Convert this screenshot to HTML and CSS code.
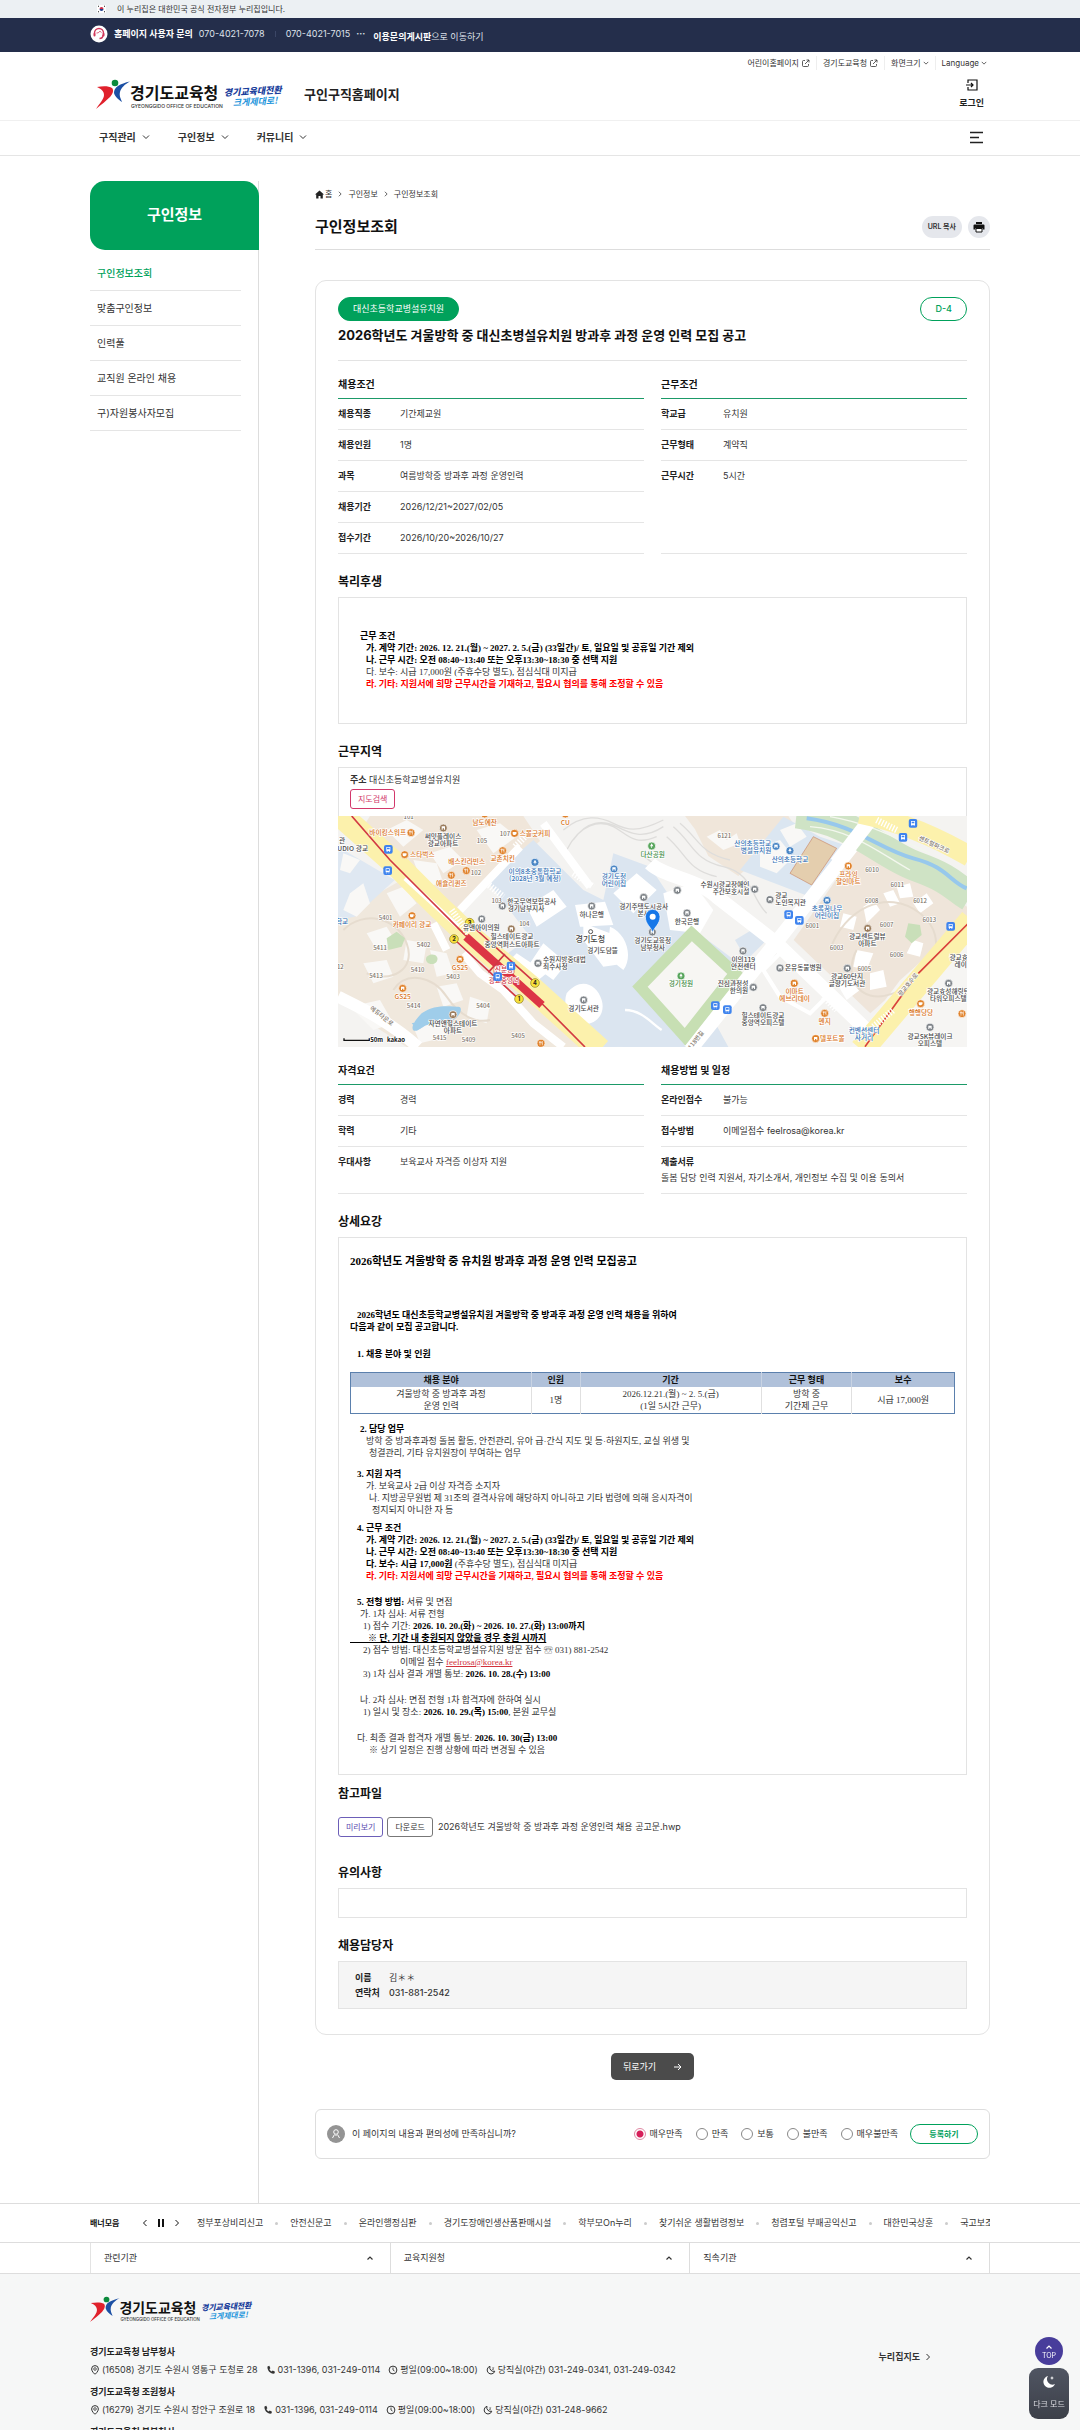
FILE: index.html
```html
<!DOCTYPE html>
<html lang="ko">
<head>
<meta charset="utf-8">
<meta name="viewport" content="width=device-width, initial-scale=1">
<title>구인정보조회 - 경기도교육청 구인구직홈페이지</title>
<link rel="stylesheet" href="styles.css">
</head>
<body>
<svg class="defs" width="0" height="0" aria-hidden="true">
  <symbol id="down" viewBox="0 0 8 8"><path d="M1 2.5 4 5.5 7 2.5" fill="none" stroke="currentColor"/></symbol>
  <symbol id="up" viewBox="0 0 8 8"><path d="M1.5 5.5 4 3 6.500 5.500" fill="none" stroke="currentColor" stroke-width="1.200"/></symbol>
  <symbol id="right" viewBox="0 0 8 8"><path d="M2.500 1 5.500 4 2.500 7" fill="none" stroke="currentColor"/></symbol>
  <symbol id="left" viewBox="0 0 8 8"><path d="M5.500 1 2.500 4 5.500 7" fill="none" stroke="currentColor"/></symbol>
  <symbol id="ext" viewBox="0 0 9 9"><path d="M4 1.500H2.500a1 1 0 0 0-1 1v4a1 1 0 0 0 1 1h4a1 1 0 0 0 1-1V5M5.500 1H8v2.500M8 1 4 5" fill="none" stroke="currentColor" stroke-width=".8"/></symbol>
  <symbol id="pin" viewBox="0 0 10 10"><path d="M5 .6a3.400 3.400 0 0 1 3.400 3.400C8.400 6.500 5 9.400 5 9.400S1.600 6.500 1.600 4A3.400 3.400 0 0 1 5 .6z" fill="none" stroke="currentColor"/><circle cx="5" cy="4" r="1.300" fill="none" stroke="currentColor" stroke-width=".8"/></symbol>
  <symbol id="tel" viewBox="0 0 10 10"><path d="M1.500 1.500 3.300.8l1.100 2.400-1 .9c.4 1 1.200 1.900 2.300 2.400l1-1L9 6.800 8.400 8.600C4.600 9.300.9 5.300 1.500 1.500z" fill="currentColor"/></symbol>
  <symbol id="clock" viewBox="0 0 10 10"><circle cx="5" cy="5" r="3.900" fill="none" stroke="currentColor"/><path d="M5 2.500V5l1.500 1" fill="none" stroke="currentColor" stroke-width=".9"/></symbol>
  <symbol id="moon" viewBox="0 0 10 10"><path d="M4 1.300A3.900 3.900 0 1 0 8.800 6.200 3.800 3.800 0 0 1 4 1.300z" fill="none" stroke="currentColor"/><path d="M6.300 2.800h1.500L6.300 4.600h1.500" fill="none" stroke="currentColor" stroke-width=".6"/></symbol>
  <symbol id="figure" viewBox="0 0 36 31">
    <circle cx="19" cy="4" r="3.300" fill="#0b8a3c"/>
    <path d="M1 8c6-1 12-1 15 1 2 2 1 6-2 9C10 22 6 25 0 30c4-6 8-10 8-14 0-4-3-6-7-8z" fill="#e0212c"/>
    <path d="M34 2.500C29 5 25 9 24 13c-1 4 1 7 2 10-3-2-7-5-8-9 0-3 1-5 4-7 3-2 7-3.500 12-4.500z" fill="#1c50a4"/>
  </symbol>
  <symbol id="bus" viewBox="0 0 28 28"><rect x="1" y="1" width="26" height="26" rx="6" fill="#3f84ee"/><path d="M8 7h12v12H8z" fill="#fff"/><path d="M10 9h8v5h-8z" fill="#3f84ee"/><path d="M9 20h3v2H9zm7 0h3v2h-3z" fill="#fff"/></symbol>
  <symbol id="poi" viewBox="0 0 28 28"><circle cx="14" cy="14" r="12" fill="currentColor" stroke="#fff" stroke-width="2"/><path d="M9 9h10v10h-3v-4h-4v4H9z" fill="#fff"/></symbol>
  <symbol id="cup" viewBox="0 0 28 28"><circle cx="14" cy="14" r="12" fill="currentColor" stroke="#fff" stroke-width="2"/><path d="M8 10h10v5a4 4 0 0 1-4 4h-2a4 4 0 0 1-4-4z" fill="#fff"/><path d="M18 11h2v4h-2" fill="none" stroke="#fff" stroke-width="1.500"/></symbol>
  <symbol id="fork" viewBox="0 0 28 28"><circle cx="14" cy="14" r="12" fill="currentColor" stroke="#fff" stroke-width="2"/><path d="M9 8v4h4V8m-2 0v12m7-12v12m0-12c-3 2-3 6 0 7" fill="none" stroke="#fff" stroke-width="1.800"/></symbol>
  <symbol id="tree" viewBox="0 0 28 28"><circle cx="14" cy="14" r="12" fill="currentColor" stroke="#fff" stroke-width="2"/><path d="M14 6l5 9h-4v5h-2v-5H9z" fill="#fff"/></symbol>
</svg>

<div class="gov"><div class="wrap gov-in">
  <svg width="9" height="8" viewBox="0 0 9 8" aria-hidden="true"><rect width="9" height="8" fill="#fff"/><path d="M2.500 4a2 2 0 0 1 4 0z" fill="#d1304a"/><path d="M2.500 4a2 2 0 0 0 4 0z" fill="#20408e"/><path d="M1 1.500 2 1M7 1l1 .5M1 6.500l1 .5M7 7l1-.5" stroke="#222"/></svg>
  <span>이 누리집은 대한민국 공식 전자정부 누리집입니다.</span>
</div></div>

<div class="notice"><div class="wrap notice-in">
  <svg width="18" height="18" viewBox="0 0 18 18" aria-hidden="true"><circle cx="9" cy="9" r="8.500" fill="#fff"/><path d="M4.500 9.500V8a4.500 4.500 0 0 1 9 0v1.500M13 10c0 2-1.500 3.500-3.500 3.500" fill="none" stroke="#d2385b" stroke-width="1.400"/><rect x="3.500" y="8" width="2" height="3.500" rx="1" fill="#d2385b"/><rect x="12.500" y="8" width="2" height="3.500" rx="1" fill="#d2385b"/><path d="M6.500 8c2 0 3-1 3.500-2 .5 1 1 1.500 1.500 1.500" fill="none" stroke="#d2385b" stroke-width=".8"/></svg>
  <b>홈페이지 사용자 문의</b>
  <span>070-4021-7078</span>
  <i class="bar"></i>
  <span>070-4021-7015</span>
  <span class="dots">···</span>
  <a href="#"><b>이용문의게시판</b>으로 이동하기</a>
</div></div>

<header class="header">
  <div class="wrap header-in">
    <h1 class="brand">
      <a href="#" aria-label="경기도교육청"><svg width="191" height="31" viewBox="0 0 191 31">
        <use href="#figure" width="36" height="31"/>
        <text class="logo-ko" x="34" y="20">경기도교육청</text>
        <text class="logo-en" x="35" y="29">GYEONGGIDO OFFICE OF EDUCATION</text>
        <text class="logo-s1" x="128" y="17" transform="rotate(-3 128 17)">경기교육대전환</text>
        <text class="logo-s2" x="137" y="27" transform="rotate(-3 137 27)">크게제대로!</text>
      </svg></a>
      <a href="#">구인구직홈페이지</a>
    </h1>
    <div class="head-side">
      <ul class="util">
        <li><a href="#">어린이홈페이지 <svg width="9" height="9"><use href="#ext"/></svg></a></li>
        <li><a href="#">경기도교육청<svg width="9" height="9"><use href="#ext"/></svg></a></li>
        <li><button type="button">화면크기 <svg width="6" height="6"><use href="#down"/></svg></button></li>
        <li><button type="button">Language <svg width="6" height="6"><use href="#down"/></svg></button></li>
      </ul>
      <a class="login" href="#">
        <svg width="12" height="12" viewBox="0 0 12 12"><path d="M2 4V1h9v10H2V8M0 6h7M5 4l2 2-2 2" fill="none" stroke="#111" stroke-width="1.200"/></svg>
        로그인
      </a>
    </div>
  </div>
</header>

<nav class="gnb"><div class="wrap gnb-in">
  <ul>
    <li><a href="#">구직관리 <svg width="8" height="8"><use href="#down"/></svg></a></li>
    <li><a href="#">구인정보 <svg width="8" height="8"><use href="#down"/></svg></a></li>
    <li><a href="#">커뮤니티 <svg width="8" height="8"><use href="#down"/></svg></a></li>
  </ul>
  <button type="button" aria-label="전체메뉴"><svg width="14" height="13" viewBox="0 0 14 13"><path d="M0 1.500h13M0 6.500h9M0 11.500h13" stroke="#222" stroke-width="1.300"/></svg></button>
</div></nav>

<div class="wrap page">
  <aside class="side">
    <h2>구인정보</h2>
    <ul>
      <li><a class="on" href="#">구인정보조회</a></li>
      <li><a href="#">맞춤구인정보</a></li>
      <li><a href="#">인력풀</a></li>
      <li><a href="#">교직원 온라인 채용</a></li>
      <li><a href="#">구)자원봉사자모집</a></li>
    </ul>
  </aside>

  <main class="main">
    <div class="crumb">
      <svg width="9" height="9" viewBox="0 0 9 9"><path d="M4.500.5 9 4.500H7.800V8.500H5.500V6h-2v2.500H1.200v-4H0z" fill="#222"/></svg>
      <a href="#">홈</a><svg width="6" height="6"><use href="#right"/></svg>
      <a href="#">구인정보</a><svg width="6" height="6"><use href="#right"/></svg>
      <a href="#">구인정보조회</a>
    </div>
    <div class="title-row">
      <h2>구인정보조회</h2>
      <div class="tools">
        <button class="url" type="button">URL 복사</button>
        <button class="print" type="button" aria-label="인쇄"><svg width="12" height="12" viewBox="0 0 12 12"><path d="M3 1h6v2H3zM1.500 3.500h9a1 1 0 0 1 1 1V8.500H9.500V7h-7v1.500H.5v-4a1 1 0 0 1 1-1z" fill="#111"/><path d="M3 7.500h6V11H3z" fill="#fff" stroke="#111"/></svg></button>
      </div>
    </div>

    <article class="card">
      <div class="tags"><span class="tag">대신초등학교병설유치원</span><span class="tag line">D-4</span></div>
      <h3 class="job">2026학년도 겨울방학 중 대신초병설유치원 방과후 과정 운영 인력 모집 공고</h3>

      <div class="cols">
        <section>
          <h4>채용조건</h4>
          <dl>
            <div><dt>채용직종</dt><dd>기간제교원</dd></div>
            <div><dt>채용인원</dt><dd>1명</dd></div>
            <div><dt>과목</dt><dd>여름방학중 방과후 과정 운영인력</dd></div>
            <div><dt>채용기간</dt><dd>2026/12/21~2027/02/05</dd></div>
            <div><dt>접수기간</dt><dd>2026/10/20~2026/10/27</dd></div>
          </dl>
        </section>
        <section>
          <h4>근무조건</h4>
          <dl>
            <div><dt>학교급</dt><dd>유치원</dd></div>
            <div><dt>근무형태</dt><dd>계약직</dd></div>
            <div><dt>근무시간</dt><dd>5시간</dd></div>
          </dl>
        </section>
      </div>

      <h4 class="sub">복리후생</h4>
      <div class="box doc welfare">
        <p class="n2"><b>근무 조건</b></p>
        <p class="n4"><b>가. 계약 기간: 2026. 12. 21.(월) ~ 2027. 2. 5.(금) (33일간)/ 토, 일요일 및 공휴일 기간 제외</b></p>
        <p class="n4"><b>나. 근무 시간: 오전 08:40~13:40 또는 오후13:30~18:30 중 선택 지원</b></p>
        <p class="n4">다. 보수: 시급 17,000원 (주휴수당 별도), 점심식대 미지급</p>
        <p class="n4 red"><b>라. 기타: 지원서에 희망 근무시간을 기재하고, 필요시 협의를 통해 조정할 수 있음</b></p>
      </div>

      <h4 class="sub">근무지역</h4>
      <div class="box place">
        <p><b>주소</b> 대신초등학교병설유치원</p>
        <button class="mini pink" type="button">지도검색</button>
      </div>
      <svg class="map" viewBox="24 18 1887 693" preserveAspectRatio="xMidYMid slice" role="img" aria-label="근무지역 지도">
        <rect x="24" y="18" width="1887" height="693" fill="#f4f3f1"/>
        <path d="M120 18h460l50 75-250 215L100 50z" fill="#f0e6da"/>
        <path d="M24 320l190-110 190 190 220 200 140 111H230L120 640 24 560z" fill="#f0e8dd"/>
        <path d="M24 110l170 100-120 110-50 10z" fill="#dfe8f2"/>
        <path d="M470 210L610 90l150 150 60 30 30-140 110 40 120 180 160 120-100 140 60 110-140-10L820 711 600 520 520 440l80-60z" fill="#dbe5f0"/>
        <path d="M960 530l130 130 30 51H880l-60-40z" fill="#dbe5f0"/>
        <path d="M1065 18h310l20 30-170 150-90-60-40-80z" fill="#f0e6da"/>
        <path d="M1360 20l110 60 90 30-120 150-210-80z" fill="#dbe6f1"/>
        <path d="M1580 110l100 20 231 160v60l-290 260-230-220 120-170z" fill="#efe5da"/>
        <path d="M1215 390l50-30 45 30-60 60z" fill="#dbe5f0"/>
        <path d="M1560 711l150-200 201-180v380z" fill="#f6f5f3"/>
        <g fill="#f9f8f6">
          <path d="M60 250l40-30 20 60-40 40-40-20zM40 130l50 20-30 40-30-10z"/>
          <path d="M170 60l60-30 50 30-60 50zM300 130l60-20 40 40-60 40zM440 60l70-20 50 40-70 50zM250 150l70 10 20 60-60 10z"/>
          <path d="M170 250l50-20 40 50-50 40zM110 370l60-20 30 50-60 20zM230 390l60 10-10 60-60-10zM100 460l70-10 20 50-60 20zM300 420l50 10 20 60-50 10zM60 590l90-20 40 70-60 20zM320 530l60-10 20 50-60 20zM420 560l60 20-10 60-60-20zM250 650l80-20 20 50-80 20z"/>
          <path d="M1130 80l40-20 20 30 30-20 10 30-50 20zM1290 110l60-20 40 50-50 50-50-20zM1350 60l50-20 30 40-50 30z"/>
        </g>
        <g fill="#fff">
          <path d="M735 285l90-10 25 70-100 5zM850 250l70-60 60 50-70 70zM590 290l80-50 40 50-90 60zM560 430l90 60-50 40-80-60zM640 400l70 60-40 50-70-50zM760 340l80 30 50 90-70 10-60-80zM840 350c50 20 70 90 40 130l-50-40zM710 550c40-50 90-30 105 20s-30 80-60 70-60-50-45-90z"/>
          <path d="M885 600c50 0 80 40 110 60" fill="none" stroke="#fff" stroke-width="7"/>
          <path d="M1000 250l90-30 60 80-40 70-90-10z"/>
          <path d="M1600 290l30-20 20 30-40 40zM1540 310l40 10-10 40-40-10zM1660 250l30-10 20 40-30 10zM1750 280l40-30 20 30-40 30zM1700 230l40-10 10 40-40 5zM1580 420l50 10-20 50-40-10zM1620 490l40-10 10 50-50 10zM1520 520l40-20 30 40-40 30zM1750 390l30 10-10 40-40-10z"/>
          <path d="M1300 480l60-60 140 130-60 60-90-50z" fill="none" stroke="#fff" stroke-width="12"/>
        </g>
        <g fill="none" stroke="#e6dccf" stroke-width="6">
          <path d="M40 360c60-60 160-40 190 40s-50 120-120 90M190 540c40-60 120-40 160 20s90 80 130 70M1500 420c40-120 170-190 270-110s30 200-80 240-150-60-110-130"/>
        </g>
        <g fill="none" stroke="#dedddb" stroke-width="4">
          <path d="M710 120c40-80 100-90 140-70s60 60 130 30M730 90c40-60 90-60 130-40s80 40 140 0M700 60c60-50 110-40 150-20s70 30 150-10M1010 80c60 50 60 100 150 120M1030 50c60 50 60 100 150 120s80 90 130 140M1050 40c60 50 60 90 150 110M940 130c20 40 80 40 110 70s120 50 160 110"/>
        </g>
        <path d="M24 560c60 30 150 70 240 151" fill="none" stroke="#fff" stroke-width="36"/>
        <path d="M640 40l140 190M570 110L390 300M400 430l50 60 70 50 90 100 90 71M310 340l40 80" fill="none" stroke="#fff" stroke-width="24"/>
        <path d="M960 160c40 40 150 50 200 100l180 140 270 260M1620 40l-260 330-280 350" fill="none" stroke="#fff" stroke-width="42"/>
        <path d="M1085 370l130 120-150 190-135-150z" fill="#f7f6f3" stroke="#c7dfb3" stroke-width="34"/>
        <path d="M1400 10c170 20 250 120 360 160s110 60 160 90" fill="none" stroke="#cfe3c5" stroke-width="90"/>
        <path d="M1430 25c150 20 220 95 320 120s110 70 160 90" fill="none" stroke="#97c8ec" stroke-width="12"/>
        <path d="M1440 50c130 10 210 80 300 130M1500 20c120 20 210 70 300 110" fill="none" stroke="#f3f7ee" stroke-width="4"/>
        <path d="M1620 30l-100 130" stroke="#fff" stroke-width="44"/>
        <path d="M1450 80l70 35-75 110-65-35z" fill="#e4ceae" stroke="#c98a6a" stroke-width="2"/>
        <path d="M170 385l30-20 25 20-10 25-40 10zM290 440c20-15 40 0 30 15s-40 5-30-15z" fill="#c9dfb9"/>
        <path d="M1735 340l35 5 5 30-30 25-20-20z" fill="#c9dfb9"/>
        <path d="M275 610c40-30 90-20 110-20s0 50-50 50-50 10-70 20-30-10 10-50zM245 640l20-5-10 15z" fill="#9fcdea"/>
        <path d="M20 5l180 160 120 120 100 95 180 150 210 190" fill="none" stroke="#fcf1ac" stroke-width="72"/>
        <path d="M225 205l160 145" stroke="#fff" stroke-width="14"/>
        <path d="M1590 10c100 20 210 60 330 130" fill="none" stroke="#fcf1ac" stroke-width="62"/>
        <path d="M1925 330l-330 390" stroke="#fcf1ac" stroke-width="74"/>
        <path d="M1915 340l-150 150M1745 515l-140 195" stroke="#d9413c" stroke-width="5"/>
        <path d="M65 18l115 132 120 120 100 100 240 215 125 126" fill="none" stroke="#d23a43" stroke-width="5"/>
        <path d="M408 380l228 205" stroke="#dc3545" stroke-width="24"/>
        <path d="M420 342l195 176M375 390l190 176M525 432l-50 55" fill="none" stroke="#d03844" stroke-width="5"/>
        <g stroke="#fff" stroke-width="20" stroke-dasharray="4 5"><path d="M365 300l50 70M470 220l50 40M730 190l60 40M555 110l40-40M1345 410l50 30M1440 260l50-40M1640 30l60 30M1630 650l60-50M1480 560l40 40"/></g>
        <g class="yl"><circle cx="419" cy="338" r="13"/><circle cx="372" cy="387" r="13"/><circle cx="615" cy="519" r="13"/><circle cx="567" cy="567" r="13"/></g>
        <g class="yt"><text x="419" y="344">3</text><text x="372" y="393">2</text><text x="615" y="525">4</text><text x="567" y="573">1</text></g>
        <rect x="492" y="468" width="60" height="24" rx="5" fill="#fff" stroke="#d03844" stroke-width="2"/>
        <g class="m rd"><text x="522" y="487">신분당</text><text x="522" y="518">광교중앙역</text></g>

        <use href="#bus" x="161" y="104" width="28" height="28"/><use href="#bus" x="159" y="168" width="28" height="28"/><use href="#bus" x="529" y="454" width="28" height="28"/><use href="#bus" x="489" y="486" width="28" height="28"/><use href="#bus" x="1735" y="26" width="28" height="28"/><use href="#bus" x="1705" y="68" width="28" height="28"/><use href="#bus" x="1362" y="300" width="28" height="28"/><use href="#bus" x="1394" y="317" width="28" height="28"/><use href="#bus" x="1848" y="335" width="28" height="28"/><use href="#bus" x="1142" y="573" width="28" height="28"/><use href="#bus" x="1178" y="585" width="28" height="28"/>

        <g color="#e0822b"><use href="#fork" x="229" y="54" width="28" height="28"/><use href="#cup" x="210" y="120" width="28" height="28"/><use href="#fork" x="350" y="182" width="28" height="28"/><use href="#fork" x="395" y="168" width="28" height="28"/><use href="#fork" x="504" y="108" width="28" height="28"/><use href="#cup" x="540" y="56" width="28" height="28"/><use href="#fork" x="450" y="-2" width="28" height="28"/><use href="#poi" x="692" y="-2" width="28" height="28"/><use href="#cup" x="232" y="303" width="28" height="28"/><use href="#poi" x="376" y="434" width="28" height="28"/><use href="#poi" x="204" y="521" width="28" height="28"/><use href="#fork" x="619" y="686" width="28" height="28"/><use href="#poi" x="1541" y="154" width="28" height="28"/><use href="#poi" x="1379" y="506" width="28" height="28"/><use href="#fork" x="1470" y="596" width="28" height="28"/><use href="#poi" x="1443" y="672" width="28" height="28"/><use href="#cup" x="1758" y="567" width="28" height="28"/><use href="#fork" x="1882" y="597" width="28" height="28"/></g>
        <g color="#7f8489"><use href="#poi" x="503" y="274" width="28" height="28"/><use href="#poi" x="441" y="313" width="28" height="28"/><use href="#poi" x="771" y="274" width="28" height="28"/><use href="#poi" x="927" y="248" width="28" height="28"/><use href="#poi" x="610" y="446" width="28" height="28"/><use href="#poi" x="747" y="556" width="28" height="28"/><use href="#poi" x="953" y="352" width="28" height="28"/><use href="#poi" x="1057" y="295" width="28" height="28"/><use href="#poi" x="1260" y="224" width="28" height="28"/><use href="#poi" x="1306" y="255" width="28" height="28"/><use href="#poi" x="1225" y="409" width="28" height="28"/><use href="#poi" x="1336" y="460" width="28" height="28"/><use href="#poi" x="1256" y="518" width="28" height="28"/><use href="#poi" x="1285" y="579" width="28" height="28"/><use href="#poi" x="1538" y="461" width="28" height="28"/><use href="#poi" x="1842" y="506" width="28" height="28"/><use href="#poi" x="1786" y="638" width="28" height="28"/><use href="#poi" x="1028" y="227" width="28" height="28"/></g>
        <g color="#9a7b5b"><use href="#poi" x="326" y="40" width="28" height="28"/><use href="#poi" x="530" y="343" width="28" height="28"/><use href="#poi" x="355" y="600" width="28" height="28"/><use href="#poi" x="1599" y="341" width="28" height="28"/></g>
        <g color="#4a86c5"><use href="#tree" x="601" y="143" width="28" height="28"/><use href="#poi" x="838" y="163" width="28" height="28"/><use href="#poi" x="1324" y="95" width="28" height="28"/><use href="#tree" x="1366" y="108" width="28" height="28"/><use href="#poi" x="1477" y="257" width="28" height="28"/></g>
        <g color="#58a55c"><use href="#tree" x="951" y="94" width="28" height="28"/><use href="#tree" x="1039" y="484" width="28" height="28"/></g>
        <circle cx="782" cy="365" r="6" fill="#fff" stroke="#555" stroke-width="3"/>

        <g class="m or"><text x="173" y="76">바이킹스워프</text><text x="277" y="142">스타벅스</text><text x="410" y="163">배스킨라빈스</text><text x="364" y="229">애슐리퀸즈</text><text x="518" y="154">교촌치킨</text><text x="615" y="78">스몰굿커피</text><text x="464" y="44">남도예찬</text><text x="706" y="46">CU</text><text x="246" y="350">카페이리 광교</text><text x="390" y="480">GS25</text><text x="218" y="568">GS25</text><text x="1555" y="202">프라임</text><text x="1555" y="223">할인마트</text><text x="1394" y="553">이마트</text><text x="1394" y="574">에브리데이</text><text x="1484" y="643">멘지</text><text x="1507" y="692">델포트몰</text><text x="1773" y="614">행행당당</text></g>
        <g class="m"><text x="36" y="100">관</text><text x="68" y="123">UDIO 광교</text><text x="339" y="86">써밋플레이스</text><text x="339" y="107">광교아파트</text><text x="605" y="283">한국무역보험공사</text><text x="588" y="304">경기남부지사</text><text x="454" y="360">유앤아이의원</text><text x="546" y="388">힐스테이트광교</text><text x="546" y="411">중앙역퍼스트아파트</text><text x="785" y="321">하나은행</text><text class="big" x="781" y="396">경기도청</text><text x="818" y="428">경기도담뜰</text><text x="941" y="296">경기주택도시공사</text><text x="941" y="317">본사</text><text x="968" y="398">경기도교육청</text><text x="968" y="419">남부청사</text><text x="703" y="457">수원지방중대법</text><text x="676" y="478">죄수사청</text><text x="761" y="604">경기도서관</text><text x="369" y="647">자연앤힐스테이트</text><text x="369" y="668">아파트</text><text x="1071" y="341">한국은행</text><text x="1185" y="231">수원시광교장애인</text><text x="1203" y="252">주간보호시설</text><text x="1354" y="264">광교</text><text x="1382" y="286">노인복지관</text><text x="1240" y="457">이의119</text><text x="1240" y="478">안전센터</text><text x="1420" y="481">온유동물병원</text><text x="1209" y="528">진심과정성</text><text x="1227" y="549">한의원</text><text x="1299" y="625">힐스테이트광교</text><text x="1299" y="646">중앙역오피스텔</text><text x="1551" y="507">광교60단지</text><text x="1551" y="528">글향기도서관</text><text x="1612" y="388">광교센트럴뷰</text><text x="1612" y="409">아파트</text><text x="1886" y="450">광교효</text><text x="1892" y="471">레이</text><text x="1855" y="553">광교효성해링턴</text><text x="1855" y="574">타워오피스텔</text><text x="1800" y="686">광교SK뷰레이크</text><text x="1800" y="707">오피스텔</text></g>
        <g class="m bl"><text x="36" y="343">학교</text><text x="615" y="191">이의8초중통합학교</text><text x="615" y="213">(2028년 3월 예정)</text><text x="852" y="208">경기도청</text><text x="852" y="229">어린이집</text><text x="1268" y="107">산의초등학교</text><text x="1278" y="128">병설유치원</text><text x="1380" y="157">산의초등학교</text><text x="1491" y="303">초록꿈나무</text><text x="1491" y="324">어린이집</text><text x="1602" y="669">컨벤션센터</text><text x="1602" y="690">사거리</text></g>
        <g class="m gn"><text x="968" y="140">다산공원</text><text x="1053" y="528">경기정원</text></g>
        <g class="m nm"><text x="236" y="27">101</text><text x="525" y="77">107</text><text x="456" y="99">105</text><text x="438" y="194">102</text><text x="500" y="280">103</text><text x="583" y="349">104</text><text x="167" y="330">5401</text><text x="281" y="411">5402</text><text x="150" y="421">5411</text><text x="31" y="477">12</text><text x="138" y="505">5413</text><text x="263" y="487">5410</text><text x="369" y="508">5403</text><text x="251" y="594">5414</text><text x="459" y="594">5404</text><text x="329" y="690">5415</text><text x="416" y="695">5409</text><text x="564" y="684">5405</text><text x="1183" y="84">6121</text><text x="1626" y="185">6010</text><text x="1702" y="232">6011</text><text x="1625" y="278">6008</text><text x="1770" y="278">6012</text><text x="1798" y="335">6013</text><text x="1670" y="350">6007</text><text x="1447" y="354">6001</text><text x="1520" y="421">6003</text><text x="1700" y="440">6006</text><text x="1603" y="484">6005</text><text x="155" y="624" transform="rotate(38 155 618)">에듀타운로</text><text x="1812" y="110" transform="rotate(25 1812 104)">센트럴파크로</text><text x="1734" y="530" transform="rotate(-50 1734 524)">광교호수로</text><text x="1098" y="696" transform="rotate(-52 1098 690)">118번길</text></g>
        <path d="M968 368c-5-18-22-25-22-48a22 22 0 0 1 44 0c0 23-17 30-22 48z" fill="#1677e8" stroke="#fff" stroke-width="2"/><circle cx="968" cy="320" r="9" fill="#fff"/>
        <path d="M42 685v6h76v-6" fill="none" stroke="#111" stroke-width="4"/>
        <g class="m sc"><text x="140" y="696">50m</text><text x="198" y="696">kakao</text></g>
      </svg>

      <div class="cols">
        <section>
          <h4>자격요건</h4>
          <dl>
            <div><dt>경력</dt><dd>경력</dd></div>
            <div><dt>학력</dt><dd>기타</dd></div>
            <div><dt>우대사항</dt><dd>보육교사 자격증 이상자 지원</dd></div>
          </dl>
        </section>
        <section>
          <h4>채용방법 및 일정</h4>
          <dl>
            <div><dt>온라인접수</dt><dd>불가능</dd></div>
            <div><dt>접수방법</dt><dd>이메일접수 feelrosa@korea.kr</dd></div>
            <div class="full"><dt>제출서류</dt><dd>돌봄 담당 인력 지원서, 자기소개서, 개인정보 수집 및 이용 동의서</dd></div>
          </dl>
        </section>
      </div>

      <h4 class="sub">상세요강</h4>
      <div class="box doc detail">
        <h5>2026학년도 겨울방학 중 유치원 방과후 과정 운영 인력 모집공고</h5>
        <div class="intro">
          <p class="n1"><b>2026학년도 대신초등학교병설유치원 겨울방학 중 방과후 과정 운영 인력 채용을 위하여</b></p>
          <p><b>다음과 같이 모집 공고합니다.</b></p>
        </div>
        <p class="n1"><b>1. 채용 분야 및 인원</b></p>
        <table>
          <colgroup><col class="c1"><col class="c2"><col class="c1"><col class="c3"><col></colgroup>
          <thead><tr><th>채용 분야</th><th>인원</th><th>기간</th><th>근무 형태</th><th>보수</th></tr></thead>
          <tbody><tr><td>겨울방학 중 방과후 과정<br>운영 인력</td><td>1명</td><td>2026.12.21.(월) ~ 2. 5.(금)<br>(1일 5시간 근무)</td><td>방학 중<br>기간제 근무</td><td>시급 17,000원</td></tr></tbody>
        </table>
        <div class="grp">
          <p class="n2"><b>2. 담당 업무</b></p>
          <p class="n4">방학 중 방과후과정 돌봄 활동, 안전관리, 유아 급·간식 지도 및 등·하원지도, 교실 위생 및</p>
          <p class="n5">청결관리, 기타 유치원장이 부여하는 업무</p>
        </div>
        <div class="grp">
          <p class="n1"><b>3. 지원 자격</b></p>
          <p class="n4">가. 보육교사 2급 이상 자격증 소지자</p>
          <p class="n5">나. 지방공무원법 제 31조의 결격사유에 해당하지 아니하고 기타 법령에 의해 응시자격이</p>
          <p class="n6">정지되지 아니한 자 등</p>
        </div>
        <div class="grp tight">
          <p class="n1"><b>4. 근무 조건</b></p>
          <p class="n4"><b>가. 계약 기간: 2026. 12. 21.(월) ~ 2027. 2. 5.(금) (33일간)/ 토, 일요일 및 공휴일 기간 제외</b></p>
          <p class="n4"><b>나. 근무 시간: 오전 08:40~13:40 또는 오후13:30~18:30 중 선택 지원</b></p>
          <p class="n4"><b>다. 보수: 시급 17,000원</b> (주휴수당 별도), 점심식대 미지급</p>
          <p class="n4 red"><b>라. 기타: 지원서에 희망 근무시간을 기재하고, 필요시 협의를 통해 조정할 수 있음</b></p>
        </div>
        <div class="grp loose">
          <p class="n1"><b>5. 전형 방법:</b> 서류 및 면접</p>
          <p class="n2">가. 1차 심사: 서류 전형</p>
          <p class="n3">1) 접수 기간: <b>2026. 10. 20.(화) ~ 2026. 10. 27.(화) 13:00까지</b></p>
          <p><b><u>&nbsp;&nbsp;&nbsp;&nbsp;&nbsp;&nbsp;&nbsp;&nbsp;※ 단, 기간 내 충원되지 않았을 경우 충원 시까지</u></b></p>
          <p class="n3">2) 접수 방법: 대신초등학교병설유치원 방문 접수 ☏ 031) 881-2542</p>
          <p class="n7">이메일 접수 <a href="mailto:feelrosa@korea.kr">feelrosa@korea.kr</a></p>
          <p class="n3">3) 1차 심사 결과 개별 통보: <b>2026. 10. 28.(수) 13:00</b></p>
        </div>
        <div class="grp loose">
          <p class="n2">나. 2차 심사: 면접 전형 1차 합격자에 한하여 실시</p>
          <p class="n3">1) 일시 및 장소: <b>2026. 10. 29.(목) 15:00</b>, 본원 교무실</p>
        </div>
        <div class="grp loose">
          <p class="n1">다. 최종 결과 합격자 개별 통보: <b>2026. 10. 30(금) 13:00</b></p>
          <p class="n5">※ 상기 일정은 진행 상황에 따라 변경될 수 있음</p>
        </div>
      </div>

      <h4 class="sub near">참고파일</h4>
      <div class="files">
        <button class="mini violet" type="button">미리보기</button>
        <button class="mini" type="button">다운로드</button>
        <span>2026학년도 겨울방학 중 방과후 과정 운영인력 채용 공고문.hwp</span>
      </div>

      <h4 class="sub far">유의사항</h4>
      <div class="box empty"></div>

      <h4 class="sub">채용담당자</h4>
      <dl class="box person">
        <div><dt>이름</dt><dd>김＊＊</dd></div>
        <div><dt>연락처</dt><dd class="num">031-881-2542</dd></div>
      </dl>
    </article>

    <button class="back" type="button">뒤로가기 <svg width="8" height="8" viewBox="0 0 8 8"><path d="M0 4h7M4 1l3 3-3 3" fill="none" stroke="#fff"/></svg></button>

    <form class="rate">
      <svg width="18" height="18" viewBox="0 0 18 18" aria-hidden="true"><circle cx="9" cy="9" r="9" fill="#949494"/><circle cx="9" cy="7" r="2.300" fill="none" stroke="#fff"/><path d="M7.500 9.500 5.500 13M10.500 9.500l2 3.500M9 10v1" stroke="#fff"/></svg>
      <p>이 페이지의 내용과 편의성에 만족하십니까?</p>
      <div class="opts">
        <label><input type="radio" name="s" checked>매우만족</label>
        <label><input type="radio" name="s">만족</label>
        <label><input type="radio" name="s">보통</label>
        <label><input type="radio" name="s">불만족</label>
        <label><input type="radio" name="s">매우불만족</label>
      </div>
      <button type="button">등록하기</button>
    </form>
  </main>
</div>

<div class="banner"><div class="wrap banner-in">
  <h2>배너모음</h2>
  <div class="ctrl">
    <button type="button" aria-label="이전"><svg width="8" height="8"><use href="#left"/></svg></button>
    <button type="button" aria-label="정지"><svg width="8" height="8" viewBox="0 0 8 8"><path d="M2 0v8M6 0v8" stroke="#111" stroke-width="2"/></svg></button>
    <button type="button" aria-label="다음"><svg width="8" height="8"><use href="#right"/></svg></button>
  </div>
  <ul>
    <li><a href="#">정부포상비리신고</a></li><li><a href="#">안전신문고</a></li><li><a href="#">온라인행정심판</a></li><li><a href="#">경기도장애인생산품판매시설</a></li><li><a href="#">학부모On누리</a></li><li><a href="#">찾기쉬운 생활법령정보</a></li><li><a href="#">청렴포털 부패공익신고</a></li><li><a href="#">대한민국상훈</a></li><li><a href="#">국고보조금 부정신고</a></li>
  </ul>
</div></div>

<div class="family"><div class="wrap family-in">
  <button type="button">관련기관 <svg width="8" height="8"><use href="#up"/></svg></button>
  <button type="button">교육지원청 <svg width="8" height="8"><use href="#up"/></svg></button>
  <button type="button">직속기관 <svg width="8" height="8"><use href="#up"/></svg></button>
</div></div>

<footer class="footer"><div class="wrap">
  <svg class="flogo" width="166" height="27" viewBox="0 0 191 31" aria-label="경기도교육청">
    <use href="#figure" width="36" height="31"/>
    <text class="logo-ko" x="34" y="20">경기도교육청</text>
    <text class="logo-en" x="35" y="29">GYEONGGIDO OFFICE OF EDUCATION</text>
    <text class="logo-s1" x="128" y="17" transform="rotate(-3 128 17)">경기교육대전환</text>
    <text class="logo-s2" x="137" y="27" transform="rotate(-3 137 27)">크게제대로!</text>
  </svg>
  <div class="foot-row">
    <address>
      <h3>경기도교육청 남부청사</h3>
      <p><span><svg><use href="#pin"/></svg>(16508) 경기도 수원시 영통구 도청로 28</span><span><svg><use href="#tel"/></svg>031-1396, 031-249-0114</span><span><svg><use href="#clock"/></svg>평일(09:00~18:00)</span><span><svg><use href="#moon"/></svg>당직실(야간) 031-249-0341, 031-249-0342</span></p>
      <h3>경기도교육청 조원청사</h3>
      <p><span><svg><use href="#pin"/></svg>(16279) 경기도 수원시 장안구 조원로 18</span><span><svg><use href="#tel"/></svg>031-1396, 031-249-0114</span><span><svg><use href="#clock"/></svg>평일(09:00~18:00)</span><span><svg><use href="#moon"/></svg>당직실(야간) 031-248-9662</span></p>
      <h3>경기도교육청 북부청사</h3>
    </address>
    <a class="sitemap" href="#">누리집지도 <svg width="8" height="8"><use href="#right"/></svg></a>
  </div>
</div></footer>

<div class="float">
  <a class="top" href="#"><svg width="8" height="8"><use href="#up"/></svg>TOP</a>
  <button class="dark" type="button"><svg width="14" height="14" viewBox="0 0 14 14"><path d="M6 1a6 6 0 1 0 7 8A5.500 5.500 0 0 1 6 1z" fill="#fff"/><path d="M10 1l.6 1.400L12 3l-1.400.6L10 5l-.6-1.400L8 3l1.400-.6z" fill="#fff"/></svg>다크 모드</button>
</div>
</body>
</html>
```

FILE: styles.css
```css
* { box-sizing: border-box; }
html { overflow-x: hidden; }
body, h1, h2, h3, h4, h5, p, ul, dl, dd { margin: 0; padding: 0; }
body {
  font: 9px/14px Inter, "Noto Sans CJK KR", sans-serif;
  color: #333;
  background: #fff;
  height: 100vh;
  overflow-x: hidden;
}
ul { list-style: none; }
a { color: inherit; text-decoration: none; }
button { font: inherit; color: inherit; background: none; border: 0; padding: 0; cursor: pointer; }
svg { flex: none; }
.defs { position: absolute; }
.wrap { width: 100%; max-width: 900px; margin: 0 auto; }

/* top notices */
.gov { background: #ecf0f3; }
.gov-in { display: flex; align-items: center; gap: 11px; height: 18px; padding-left: 7px; font-size: 8px; }
.notice { background: #242e4b; color: #fff; }
.notice-in { display: flex; align-items: center; gap: 6px; height: 34px; padding-bottom: 2px; color: #dfe2ea; }
.notice b { color: #fff; }
.bar { width: 1px; height: 6px; margin: 0 4px; background: #3b4666; }
.dots { font-weight: 700; }
.notice a { padding: 5px 0 0 2px; }

/* header */
.header { border-bottom: 1px solid #f0f0f0; }
.header-in { display: flex; justify-content: space-between; height: 68px; }
.brand { display: flex; align-items: center; gap: 17px; padding: 16px 0 0 6px; font-size: 13px; line-height: 20px; color: #222; }
.brand a { display: flex; }
.logo-ko { font: 700 16px "Noto Sans CJK KR", sans-serif; fill: #111; }
.logo-en { font: 500 5px Inter, sans-serif; fill: #333; }
.logo-s1 { font: italic 900 9px "Noto Sans CJK KR", sans-serif; fill: #1b3f9c; }
.logo-s2 { font: italic 700 9px "Noto Sans CJK KR", sans-serif; fill: #1f96dc; }
.head-side { display: flex; flex-direction: column; align-items: flex-end; gap: 9px; padding-top: 4px; }
.util { display: flex; font-size: 8px; }
.util li { display: flex; padding: 0 3px 0 6px; }
.util li + li { border-left: 1px solid #eee; margin-left: 3px; }
.util a, .util button { display: flex; align-items: center; gap: 2px; }
.login { display: flex; flex-direction: column; align-items: center; gap: 5px; padding-right: 6px; font-weight: 700; color: #222; }
.gnb { border-bottom: 1px solid #e5e5e5; }
.gnb-in { display: flex; justify-content: space-between; align-items: center; height: 34px; padding: 0 6px 2px 9px; }
.gnb ul { display: flex; gap: 28px; font-size: 10px; font-weight: 600; }
.gnb a { display: flex; align-items: center; gap: 6px; }
.gnb button { display: flex; }

/* page */
.page { display: grid; grid-template-columns: 169px minmax(0, 1fr); column-gap: 56px; }
.side { border-right: 1px solid #ddd; margin-top: 25px; }
.side h2 { height: 69px; margin-right: -1px; border-radius: 15px 15px 0 15px; background: #00a15b; color: #fff; font-size: 15px; line-height: 68px; text-align: center; }
.side ul { padding: 6px 17px 0 0; font-size: 10px; }
.side li { border-bottom: 1px solid #e5e5e5; }
.side a { display: block; padding: 10px 7px; }
.side .on { color: #00a15b; font-weight: 500; }
.main { padding: 31px 0 44px; }
.crumb { display: flex; align-items: center; gap: 5px; font-size: 8px; }
.crumb svg:first-child { margin-right: -4px; }
.title-row { display: flex; justify-content: space-between; align-items: center; padding: 14px 0 10px; border-bottom: 1px solid #ddd; }
.title-row h2 { font-size: 15px; line-height: 24px; color: #111; }
.tools { display: flex; gap: 6px; }
.tools button { height: 22px; border-radius: 11px; background: #e5e7ec; }
.url { padding: 0 6px; font-size: 7px; font-weight: 600; }
.print { display: grid; place-items: center; width: 22px; }

.card { margin-top: 30px; padding: 16px 22px 25px; border: 1px solid #e3e3e3; border-radius: 11px; }
.tags { display: flex; justify-content: space-between; }
.tag { padding: 4px 14px; border: 1px solid #00a15b; border-radius: 12px; background: #00a15b; color: #fff; }
.tag.line { background: #fff; color: #00a15b; font-weight: 500; }
.job { padding: 4px 0 15px; border-bottom: 1px solid #e3e3e3; font-size: 13px; line-height: 20px; color: #111; }
.cols { display: grid; grid-template-columns: 1fr 1fr; gap: 17px; padding-top: 15px; }
.cols section { display: flex; flex-direction: column; }
.cols h4 { padding-bottom: 6px; border-bottom: 1px solid #1b9a68; font-size: 10px; line-height: 16px; color: #111; }
.cols dl { display: flex; flex-direction: column; flex: 1; }
.cols dl div { display: grid; grid-template-columns: 62px 1fr; padding: 8px 0; border-bottom: 1px solid #e5e5e5; }
.cols dl div:last-child { flex: 1; align-content: start; }
.cols dl .full { grid-template-columns: 1fr; row-gap: 2px; }
dt { font-weight: 700; color: #222; }
.sub { margin: 20px 0 7px; font-size: 12px; line-height: 16px; color: #111; }
.sub.near { margin: 11px 0 15px; }
.sub.far { margin: 28px 0 7px; }
.box { border: 1px solid #e3e3e3; padding: 0 11px; }

/* posted document text */
.doc { font: 9px/12px "Liberation Serif", "Noto Sans CJK KR", serif; }
.doc b { color: #000; }
.doc .red, .doc .red b { color: #f00; }
.n1 { padding-left: 7px; }
.n2 { padding-left: 10px; }
.n3 { padding-left: 13px; }
.n4 { padding-left: 16px; }
.n5 { padding-left: 19px; }
.n6 { padding-left: 22px; }
.n7 { padding-left: 50px; }
.welfare { padding: 32px 11px 33px; }
.place { border-bottom: 0; padding-top: 5px; padding-bottom: 7px; }
.place p { margin-bottom: 2px; }
.mini { height: 20px; padding: 0 7px; border: 1px solid #777; border-radius: 3px; font-size: 8px; line-height: 18px; }
.mini.pink { border-color: #d2386b; color: #d2386b; }
.mini.violet { border-color: #6c5fb8; color: #5a4bb0; }
.detail { padding: 12px 11px 18px; }
.detail h5 { font-size: 11px; line-height: 22px; color: #000; }
.intro { margin: 37px 0 15px; }
.detail table { width: 100%; margin-top: 12px; border-collapse: collapse; table-layout: fixed; border: 1px solid #5b80ad; text-align: center; line-height: 12px; }
.detail th { padding: 1px 0; background: #b0c1da; color: #111; border-right: 1px solid #c8d3e3; }
.detail td { padding: 1px 0; border-right: 1px solid #e0e0e0; }
.detail th:last-child, .detail td:last-child { border-right-color: #5b80ad; }
.c1 { width: 30%; }
.c2 { width: 8%; }
.c3 { width: 15%; }
.grp { margin-top: 9px; }
.grp.tight { margin-top: 6px; }
.grp.loose { margin-top: 14px; }
.grp a { color: #d2303a; text-decoration: underline; }

.files { display: flex; align-items: center; gap: 4px; }
.files span { padding-left: 1px; }
.empty { height: 30px; }
.person { padding: 8px 16px; background: #f5f5f5; }
.person div { display: grid; grid-template-columns: 34px 1fr; line-height: 15px; }
.num { font-weight: 500; }

.back { display: flex; align-items: center; justify-content: space-between; width: 83px; height: 27px; margin: 18px auto 0; padding: 0 12px; border-radius: 5px; background: #4b4b4b; color: #fff; }
.rate { display: flex; align-items: center; gap: 7px; margin-top: 29px; padding: 14px 11px; border: 1px solid #ddd; border-radius: 6px; }
.rate p { flex: 1; }
.opts { display: flex; gap: 13px; margin-right: 5px; }
.opts label { display: flex; align-items: center; gap: 4px; }
.opts input { appearance: none; width: 12px; height: 12px; margin: 0; border: 1px solid #888; border-radius: 50%; background: #fff; }
.opts input:checked { border-color: #e08aa5; background: radial-gradient(#d6205a 3px, #fff 4px); }
.rate button { width: 68px; height: 20px; border: 1px solid #00a15b; border-radius: 10px; color: #00a15b; font-size: 8px; font-weight: 700; }

/* bottom */
.banner { border-top: 1px solid #ddd; }
.banner-in { display: flex; align-items: center; height: 38px; overflow: hidden; }
.banner h2 { flex: none; width: 51px; font-size: 8px; color: #111; }
.ctrl { display: flex; gap: 8px; margin-right: 16px; color: #111; }
.ctrl button { display: flex; }
.banner ul { display: flex; min-width: 0; overflow: hidden; white-space: nowrap; }
.banner li { display: flex; align-items: center; }
.banner li + li::before { content: ""; width: 3px; height: 3px; margin: 0 12px; border-radius: 50%; background: #ccc; }
.family { border: solid #ddd; border-width: 1px 0; }
.family-in { display: grid; grid-template-columns: repeat(3, 1fr); border-left: 1px solid #e3e3e3; }
.family button { display: flex; align-items: center; justify-content: space-between; height: 30px; padding: 0 16px 0 13px; border-right: 1px solid #ddd; }
.footer { background: #f6f7f7; padding: 22px 0 80px; }
.flogo { display: block; }
.foot-row { display: flex; justify-content: space-between; padding: 22px 58px 0 0; }
address { font-style: normal; }
address h3 { font-size: 9px; line-height: 14px; color: #222; }
address p { display: flex; gap: 8px; padding: 4px 0 8px; }
address span { display: flex; align-items: center; gap: 2px; }
address svg { width: 10px; height: 10px; }
.sitemap { display: flex; align-items: center; align-self: flex-start; gap: 4px; padding-top: 5px; font-weight: 700; }

.float { position: fixed; right: 11px; bottom: 11px; display: flex; flex-direction: column; align-items: center; gap: 3px; }
.top { display: flex; flex-direction: column; align-items: center; justify-content: center; width: 28px; height: 28px; border-radius: 50%; background: #483d9b; color: #fff; font-size: 7px; line-height: 9px; }
.dark { display: flex; flex-direction: column; align-items: center; gap: 8px; width: 40px; height: 51px; padding-top: 7px; border-radius: 9px; background: linear-gradient(#505562, #3c4049); color: #dcdde2; font-size: 8px; }

/* map */
.map { display: block; width: 100%; aspect-ratio: 1887 / 693; }
.m { font: 500 20px "Noto Sans CJK KR", sans-serif; text-anchor: middle; fill: #474747; stroke: #fff; stroke-width: 4px; paint-order: stroke; }
.m .big { font-size: 24px; }
.or { fill: #d9731a; }
.bl { fill: #3572b5; }
.gn { fill: #3d8a41; }
.rd { fill: #d03844; }
.nm { fill: #7d7468; font-size: 18px; }
.sc { fill: #111; font-size: 18px; font-weight: 700; }
.yl { fill: #f8e13c; stroke: #8b7d20; stroke-width: 2px; }
.yt { font: 700 17px Inter, sans-serif; text-anchor: middle; fill: #222; }
```
